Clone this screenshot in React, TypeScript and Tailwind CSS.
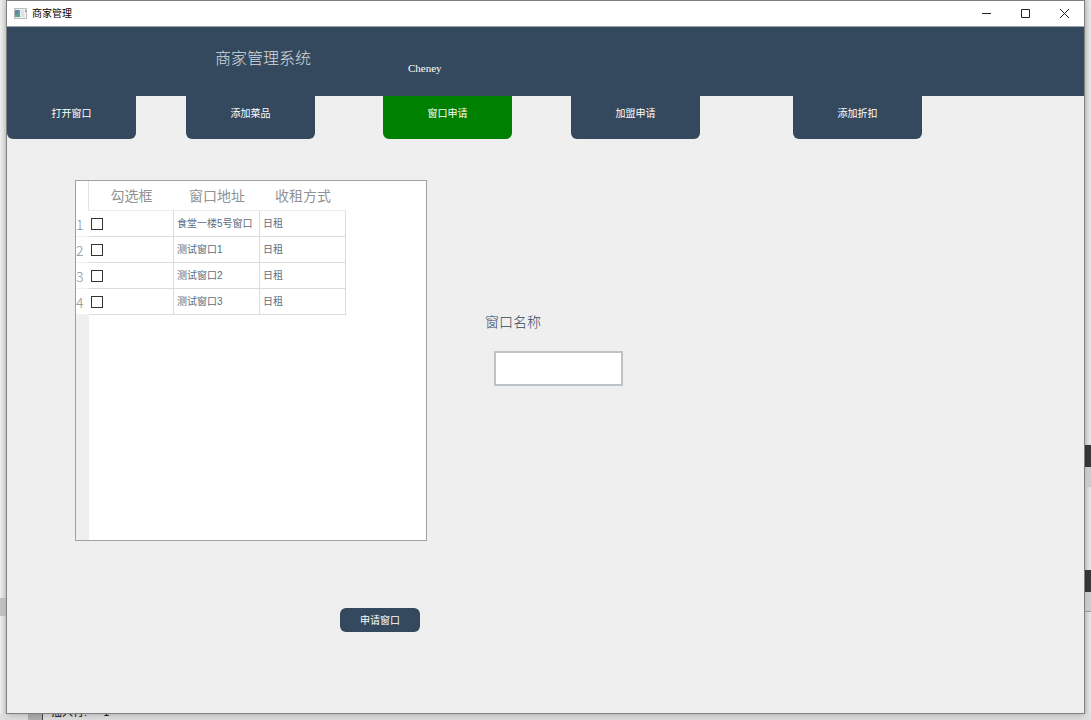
// Merchant management window, "apply for a stall" tab
import { useState } from 'react'

interface Tab {
  label: string
  column: string
}

interface Stall {
  address: string
  rent: string
}

const tabs: Tab[] = [
  { label: '打开窗口', column: 'col-start-1' },
  { label: '添加菜品', column: 'col-start-3' },
  { label: '窗口申请', column: 'col-start-5' },
  { label: '加盟申请', column: 'col-start-7' },
  { label: '添加折扣', column: 'col-start-9' },
]

const stalls: Stall[] = [
  { address: '食堂一楼5号窗口', rent: '日租' },
  { address: '测试窗口1', rent: '日租' },
  { address: '测试窗口2', rent: '日租' },
  { address: '测试窗口3', rent: '日租' },
]

function TitleBar() {
  return (
    <div className="flex h-[26px] items-center bg-white border-b border-[#9aa5b0] pl-[7px]">
      <svg width="13" height="11" viewBox="0 0 13 11" aria-hidden="true">
        <rect x="0.5" y="0.5" width="12" height="10" fill="#eef0f1" stroke="#b9bec1" />
        <rect x="1" y="2" width="5" height="7" fill="#5f9f91" />
        <rect x="1" y="2" width="3" height="4" fill="#6485a3" />
        <rect x="7" y="2" width="3" height="7" fill="#dfe2e4" />
        <rect x="11" y="2" width="1" height="2" fill="#8c9499" />
      </svg>
      <span className="ml-[5px] flex-1 text-[10px] text-black">商家管理</span>
      <button type="button" aria-label="Minimize" className="flex h-full w-[39px] items-center justify-center">
        <svg width="9" height="9" viewBox="0 0 9 9" stroke="#222" fill="none">
          <path d="M0 4.5h9" />
        </svg>
      </button>
      <button type="button" aria-label="Maximize" className="flex h-full w-[39px] items-center justify-center">
        <svg width="9" height="9" viewBox="0 0 9 9" stroke="#222" fill="none">
          <path d="M0.5 0.5h8v8h-8z" />
        </svg>
      </button>
      <button type="button" aria-label="Close" className="flex h-full w-[39px] items-center justify-center">
        <svg width="9" height="9" viewBox="0 0 9 9" stroke="#222" fill="none">
          <path d="M0 0l9 9M9 0l-9 9" />
        </svg>
      </button>
    </div>
  )
}

function StallTable() {
  return (
    <div className="flex h-[361px] flex-col border border-[#a0a0a0] bg-white">
      <table className="w-[270px] table-fixed border-separate border-spacing-0 text-left">
        <colgroup>
          <col className="w-[13px]" />
          <col className="w-[85px]" />
          <col className="w-[86px]" />
          <col className="w-[86px]" />
        </colgroup>
        <thead>
          <tr className="h-[30px] text-sm text-[#929292]">
            <td className="border-r border-[#e4e4e4] p-0"></td>
            <th className="border-b border-[#ececec] p-0 text-center font-normal">勾选框</th>
            <th className="border-b border-[#ececec] p-0 text-center font-normal">窗口地址</th>
            <th className="border-b border-[#ececec] p-0 text-center font-normal">收租方式</th>
          </tr>
        </thead>
        <tbody>
          {stalls.map((stall, i) => (
            <tr key={stall.address} className="h-[26px] text-[10px] text-[#5d6d7e]">
              <th className="border-b border-[#f0f0f0] p-0 font-['Noto_Sans_CJK_SC',sans-serif] text-sm leading-5 font-light text-[#909090]">
                {i + 1}
              </th>
              <td className="border-r border-b border-[#dcdcdc] p-0 pl-[2px]">
                <input
                  type="checkbox"
                  aria-label={stall.address}
                  className="block size-3 appearance-none border border-[#333] bg-white checked:bg-[#34495e]"
                />
              </td>
              <td className="border-r border-b border-[#dcdcdc] p-0 pl-[3px] whitespace-nowrap">{stall.address}</td>
              <td className="border-r border-b border-[#dcdcdc] p-0 pl-[3px]">{stall.rent}</td>
            </tr>
          ))}
        </tbody>
      </table>
      <div className="w-[13px] flex-1 bg-[#efefef]" />
    </div>
  )
}

export default function App() {
  const [active, setActive] = useState('窗口申请')

  return (
    <div className="flex min-h-screen flex-col overflow-hidden bg-[#dedede] font-['Liberation_Sans','Noto_Sans_CJK_SC',sans-serif]">
      <div className="flex flex-1">
        {/* Left edge of the window behind */}
        <div className="flex w-[6px] flex-col bg-linear-to-r from-[#efefef] to-[#cfcfcf]">
          <div className="mt-[598px] h-[18px] bg-[#c0c0c0]" />
        </div>

        <div className="z-10 flex min-w-0 flex-1 flex-col border border-[#808080] bg-[#efefef] shadow-md">
          <TitleBar />

          <header className="flex h-[69px] items-start bg-[#34495e] pl-[208px]">
            <h1 className="w-[193px] pt-5 text-base leading-6 font-light text-[#d5dade]">商家管理系统</h1>
            <span className="pt-[33px] font-['Liberation_Serif',serif] text-[11px] leading-4 text-white">Cheney</span>
          </header>

          <nav className="grid grid-cols-[129px_50fr_129px_68fr_129px_59fr_129px_93fr_129px_162fr]">
            {tabs.map((tab) => (
              <button
                key={tab.label}
                type="button"
                onClick={() => setActive(tab.label)}
                className={`${tab.column} row-start-1 flex h-[43px] items-center justify-center rounded-b-md pb-2 text-[10px] text-white ${
                  active === tab.label ? 'bg-[#008000]' : 'bg-[#34495e]'
                }`}
              >
                {tab.label}
              </button>
            ))}
          </nav>

          <main className="flex flex-1 gap-[58px] pt-[41px] pb-20 pl-[68px]">
            <section className="flex w-[352px] flex-col">
              <StallTable />
              <button
                type="button"
                className="mt-[67px] mr-[7px] h-6 w-20 self-end rounded-md bg-[#34495e] text-[10px] text-white"
              >
                申请窗口
              </button>
            </section>

            <form className="flex flex-col pt-[132px]">
              <label htmlFor="stall-name" className="text-sm leading-5 font-light text-[#34495e]">
                窗口名称
              </label>
              <input
                id="stall-name"
                type="text"
                className="mt-[19px] ml-[9px] h-[35px] w-[129px] border-2 border-[#bdc3c7] bg-white px-2 text-sm outline-none"
              />
            </form>
          </main>
        </div>

        {/* Right edge of the window behind */}
        <div className="flex w-[6px] flex-col bg-linear-to-r from-[#c9c9c9] to-[#ebebeb]">
          <div className="mt-[445px] h-[22px] bg-[#373737]" />
          <div className="h-5 bg-[#cccccc]" />
          <div className="mt-[83px] h-[22px] bg-[#373737]" />
          <div className="h-5 border-b border-[#999] bg-[#cccccc]" />
        </div>
      </div>

      {/* Status line of the window behind, tucked under this one */}
      <div className="-mt-[10px] flex h-4 items-center pl-7 text-[11px] leading-4 text-black">
        <span className="h-full w-[15px] border-r border-[#444] bg-[#b0b0b0]" />
        <span className="ml-2 whitespace-pre">插入行:  "  1</span>
      </div>
    </div>
  )
}
